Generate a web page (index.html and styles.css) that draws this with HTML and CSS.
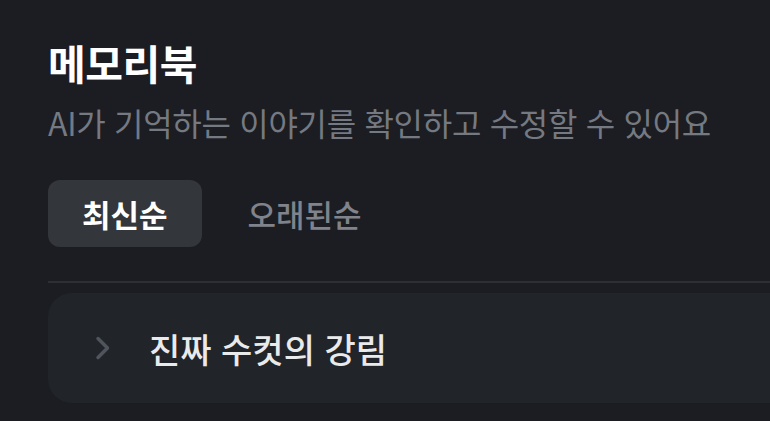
FILE: index.html
```html
<!DOCTYPE html>
<html lang="ko">

<head>
    <meta charset="UTF-8">
    <title>메모리북</title>
    <link rel="stylesheet" href="styles.css">
</head>

<body>
    <div class="page">
        <h1 class="title">메모리북</h1>
        <p class="desc">AI가 기억하는 이야기를 확인하고 수정할 수 있어요</p>
        <div class="tabs">
            <button class="tab active">최신순</button>
            <button class="tab">오래된순</button>
        </div>
        <div class="list">
            <div class="item">
                <svg class="arrow" width="16" height="24" viewBox="0 0 16 24">
                    <path d="M3 2.5 L12.5 12 L3 21.5" fill="none" stroke="#50545c" stroke-width="3.5" stroke-linecap="round" stroke-linejoin="round" />
                </svg>
                <span class="item-title">진짜 수컷의 강림</span>
            </div>
        </div>
    </div>
</body>

</html>
```

FILE: styles.css
```css
* {
    margin: 0;
    padding: 0;
    box-sizing: border-box;
}

html,
body {
    background: #1b1d22;
    overflow: hidden;
}

body {
    font-family: "Noto Sans CJK KR", "Noto Sans", sans-serif;
    color: #ffffff;
}

.page {
    width: 1000px;
    padding: 37px 0 0 48px;
}

.title {
    font-size: 41px;
    font-weight: 700;
    line-height: 50px;
    letter-spacing: -0.5px;
}

.desc {
    margin-top: 13px;
    font-size: 32px;
    line-height: 44px;
    color: #757981;
    letter-spacing: -0.3px;
}

.tabs {
    display: flex;
    gap: 12px;
    margin-top: 36px;
    padding-bottom: 34px;
    border-bottom: 2px solid #2c2f34;
}

.tab {
    height: 67px;
    padding: 0 34px;
    border: none;
    border-radius: 12px;
    background: transparent;
    font-family: inherit;
    font-size: 31px;
    font-weight: 500;
    color: #80838b;
    cursor: pointer;
}

.tab.active {
    background: #33363b;
    color: #ffffff;
    font-weight: 700;
}

.list {
    margin-top: 10px;
}

.item {
    display: flex;
    align-items: center;
    gap: 38px;
    height: 110px;
    padding-left: 47px;
    border-radius: 24px;
    background: #212429;
}

.item-title {
    font-size: 34px;
    font-weight: 500;
    color: #e9eaec;
}
```
